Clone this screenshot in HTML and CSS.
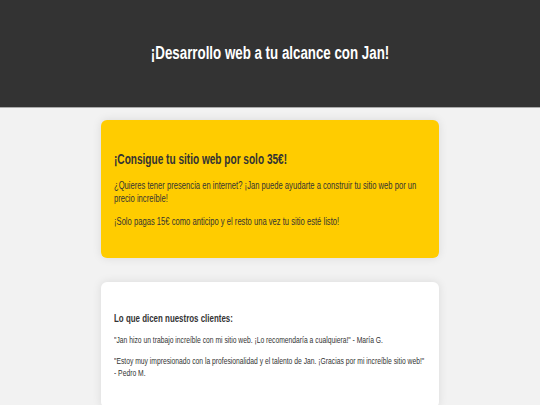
FILE: index.html
```html
<!DOCTYPE html>
<html lang="es">
<head>
    <meta charset="UTF-8">
    <meta name="viewport" content="width=device-width, initial-scale=1.0">
    <title>Jan - Desarrollo web</title>
    <link rel="stylesheet" href="styles.css">
</head>
<body>
    <header>
        <h1>¡Desarrollo web a tu alcance con Jan!</h1>
    </header>

    <main>
        <section class="offer">
            <div class="narrow">
                <h2>¡Consigue tu sitio web por solo 35€!</h2>
                <p>¿Quieres tener presencia en internet? ¡Jan puede ayudarte a construir tu sitio web por un precio increíble!</p>
                <p>¡Solo pagas 15€ como anticipo y el resto una vez tu sitio esté listo!</p>
            </div>
        </section>

        <section class="reviews">
            <div class="narrow">
                <h3>Lo que dicen nuestros clientes:</h3>
                <p>"Jan hizo un trabajo increíble con mi sitio web. ¡Lo recomendaría a cualquiera!" - María G.</p>
                <p>"Estoy muy impresionado con la profesionalidad y el talento de Jan. ¡Gracias por mi increíble sitio web!" - Pedro M.</p>
            </div>
        </section>
    </main>
</body>
</html>
```

FILE: styles.css
```css
body {
    margin: 0;
    font-family: "Liberation Sans", Arial, Helvetica, sans-serif;
    background-color: #f2f2f2;
    color: #333;
    overflow: hidden;
}

header {
    display: flex;
    justify-content: center;
    align-items: center;
    height: 107px;
    background-color: #333;
    border-bottom: 1px solid #aaa;
}
header h1 {
    margin: 0;
    color: white;
    font-size: 18px;
    font-weight: 700;
    transform: scaleX(0.74);
}

main {
    display: flex;
    flex-direction: column;
    align-items: center;
    gap: 24px;
    padding-top: 12px;
}

section {
    box-sizing: border-box;
    width: 338px;
    padding: 20px 13px;
    border-radius: 6px;
    box-shadow: 0 0 10px rgba(0, 0, 0, 0.1);
}

/* the text in the shot is squeezed sideways */
.narrow {
    width: calc(100% / 0.72);
    transform: scaleX(0.72);
    transform-origin: left top;
}
.narrow p {
    margin: 8px 0 10px;
    font-size: 10.6px;
    line-height: 13px;
}

.offer {
    background-color: #ffcc00;
}
.offer h2 {
    margin: 11px 0 12px;
    font-size: 14px;
    line-height: 16px;
}

.reviews {
    background-color: white;
}
.reviews h3 {
    margin: 9.5px 0;
    font-size: 11px;
    line-height: 13px;
}
.reviews p {
    margin: 9px 0;
    font-size: 9.4px;
    line-height: 12px;
}
```
